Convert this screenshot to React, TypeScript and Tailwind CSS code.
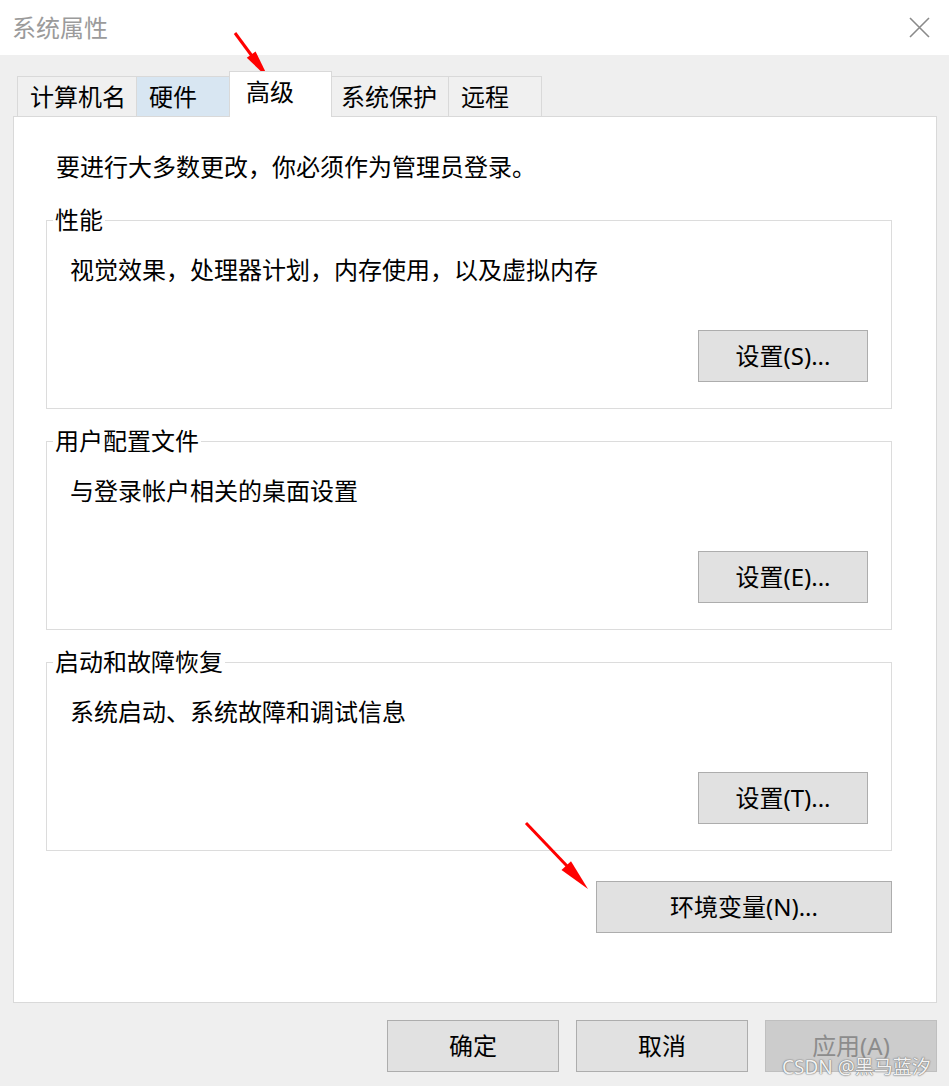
import React from 'react';

const font = "font-['Noto_Sans','Noto_Sans_CJK_SC',sans-serif]";

const tabs = [
  { label: '计算机名', cls: 'w-[119px] h-[40px] border-t border-l border-[#d9d9d9] bg-[#f0f0f0] pl-[12px]' },
  { label: '硬件', cls: 'w-[93px] h-[40px] border-t border-l border-[#d9d9d9] bg-[#d8e6f2] pl-[12px]' },
  { label: '高级', cls: 'w-[103px] h-[46px] -mb-[1px] relative z-10 border-t border-l border-r border-[#d9d9d9] bg-white pl-[16px] pb-[6px]' },
  { label: '系统保护', cls: 'w-[116px] h-[40px] border-t border-[#d9d9d9] bg-[#f0f0f0] pl-[9px]' },
  { label: '远程', cls: 'w-[94px] h-[40px] border-t border-l border-r border-[#d9d9d9] bg-[#f0f0f0] pl-[12px]' },
];

const groups = [
  { title: '性能', desc: '视觉效果，处理器计划，内存使用，以及虚拟内存', btn: '设置(S)...', mt: 'mt-[26px]' },
  { title: '用户配置文件', desc: '与登录帐户相关的桌面设置', btn: '设置(E)...', mt: 'mt-[20px]' },
  { title: '启动和故障恢复', desc: '系统启动、系统故障和调试信息', btn: '设置(T)...', mt: 'mt-[20px]' },
];

function Button({ children, className = '', disabled = false }: { children: React.ReactNode; className?: string; disabled?: boolean }) {
  return (
    <button
      className={`h-[52px] flex items-center justify-center text-[24px] leading-[30px] border ${
        disabled ? 'bg-[#cccccc] border-[#bfbfbf] text-[#8c8c8c]' : 'bg-[#e1e1e1] border-[#adadad] text-black'
      } ${className}`}
    >
      {children}
    </button>
  );
}

export default function App() {
  return (
    <div className={`relative w-[949px] h-[1086px] bg-[#efefef] overflow-hidden ${font} text-black`}>
      {/* title bar */}
      <div className="h-[55px] bg-white flex items-center justify-between pl-[12px] pr-[19px]">
        <span className="text-[24px] leading-[30px] text-[#9b9b9b]">系统属性</span>
        <svg width="21" height="21" viewBox="0 0 21 21" className="text-[#8a8a8a]">
          <path d="M1 1L20 20M20 1L1 20" stroke="currentColor" strokeWidth="1.6" />
        </svg>
      </div>

      {/* tabs */}
      <div className="mt-[16px] ml-[17px] flex items-end">
        {tabs.map((t) => (
          <div key={t.label} className={`flex items-center text-[24px] leading-[30px] ${t.cls}`}>
            {t.label}
          </div>
        ))}
      </div>

      {/* panel */}
      <div className="ml-[13px] w-[924px] bg-white border border-[#d9d9d9] pt-[35px] pl-[32px] pr-[44px] pb-[69px] flex flex-col">
        <p className="ml-[10px] text-[24px] leading-[30px]">要进行大多数更改，你必须作为管理员登录。</p>

        {groups.map((g) => (
          <fieldset key={g.title} className={`${g.mt} border border-[#dcdcdc] pt-[23px] pb-[26px] pl-[23px] pr-[23px] flex flex-col`}>
            <legend className="-ml-[17px] px-[2px] text-[24px] leading-[24px]">{g.title}</legend>
            <p className="text-[24px] leading-[30px]">{g.desc}</p>
            <Button className="mt-[45px] self-end w-[170px]">{g.btn}</Button>
          </fieldset>
        ))}

        <Button className="mt-[30px] self-end w-[296px]">环境变量(N)...</Button>
      </div>

      {/* bottom buttons */}
      <div className="mt-[17px] pr-[12px] flex justify-end gap-[17px]">
        <Button className="w-[172px]">确定</Button>
        <Button className="w-[172px]">取消</Button>
        <Button className="w-[172px]" disabled>应用(A)</Button>
      </div>

      {/* watermark */}
      <div className="absolute left-[782px] top-[1054px] text-[19px] leading-[26px] text-[#f2f2f2] [text-shadow:0_0_1px_#777,0_0_1px_#777,0_0_2px_#999] pointer-events-none">
        CSDN @黑马蓝汐
      </div>

      {/* annotation arrows */}
      <svg className="absolute inset-0 pointer-events-none" width="949" height="1086">
        <line x1="235" y1="33" x2="252" y2="56" stroke="#ff0000" strokeWidth="3" />
        <polygon points="269,79 246.8,57.8 255.6,51.4" fill="#ff0000" />
        <line x1="526" y1="823" x2="567" y2="866" stroke="#ff0000" strokeWidth="3" />
        <polygon points="588,889 561.5,870 571,861.3" fill="#ff0000" />
      </svg>
    </div>
  );
}
